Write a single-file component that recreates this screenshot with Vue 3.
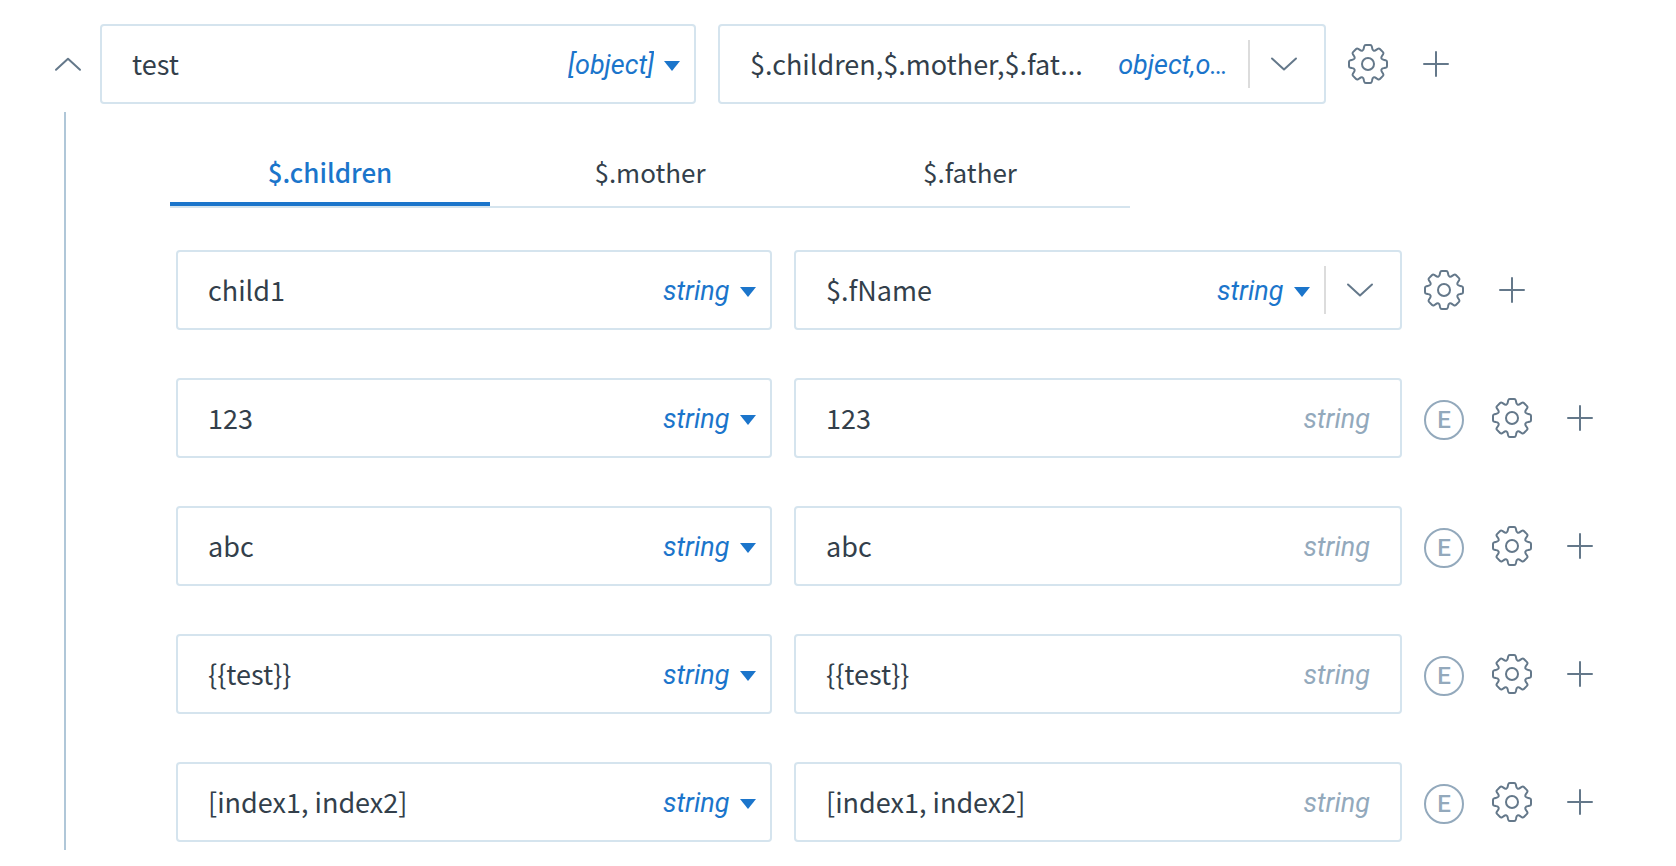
<script setup>
import { ref } from 'vue'

const root = ref({ name: 'test', type: '[object]', source: '$.children,$.mother,$.fat...', sourceType: 'object,o…' })
const tabs = ['$.children', '$.mother', '$.father']
const activeTab = ref(0)

const rows = ref([
  { name: 'child1', source: '$.fName', picker: true },
  { name: '123', source: '123', picker: false },
  { name: 'abc', source: 'abc', picker: false },
  { name: '{{test}}', source: '{{test}}', picker: false },
  { name: '[index1, index2]', source: '[index1, index2]', picker: false },
])

// Outline of an eight-toothed gear centred in a 40 x 40 box.
function gearOutline() {
  const place = (angle, u, v) => {
    const x = 20 + u * Math.cos(angle) + v * Math.sin(angle)
    const y = 20 + u * Math.sin(angle) - v * Math.cos(angle)
    return `${x.toFixed(2)} ${y.toFixed(2)}`
  }
  let d = ''
  for (let i = 0; i < 8; i++) {
    const p = (u, v) => place((i * Math.PI) / 4, u, v)
    d += i === 0 ? `M${p(-5.55, 13.4)}` : ''
    d += `Q${p(-4.4, 13.9)} ${p(-4.1, 16.2)}L${p(-3.8, 17.6)}Q${p(-3.5, 19)} ${p(-2.2, 19)}`
    d += `L${p(2.2, 19)}Q${p(3.5, 19)} ${p(3.8, 17.6)}L${p(4.1, 16.2)}Q${p(4.4, 13.9)} ${p(5.55, 13.4)}`
  }
  return d + 'Z'
}
const gear = gearOutline()
</script>

<template>
  <main class="mapper">
    <div class="row root-row">
      <button class="icon-btn collapse" type="button" aria-label="Collapse">
        <svg class="icon" viewBox="0 0 40 40"><path d="M8 25.7 20 14.7l12 11" /></svg>
      </button>
      <div class="fields">
        <div class="field">
          <input v-model="root.name" class="text" type="text" aria-label="Target name" />
          <span class="type">
            <select class="type-select" aria-label="Target type"><option>{{ root.type }}</option></select>
            <svg class="caret" viewBox="0 0 16 10"><path d="M0 0h16L8 10z" /></svg>
          </span>
        </div>
        <div class="field">
          <input v-model="root.source" class="text" type="text" aria-label="Source path" />
          <button class="type-summary" type="button">{{ root.sourceType }}</button>
          <button class="opener" type="button" aria-label="Choose source">
            <svg class="icon" viewBox="0 0 40 40"><path d="M8 14.5l12 11 12-11" /></svg>
          </button>
        </div>
      </div>
      <div class="actions">
        <button class="icon-btn" type="button" aria-label="Settings">
          <svg class="icon" viewBox="0 0 40 40"><path :d="gear" /><circle cx="20" cy="20" r="6" /></svg>
        </button>
        <button class="icon-btn" type="button" aria-label="Add">
          <svg class="icon" viewBox="0 0 40 40"><path d="M8 20h24M20 8v24" /></svg>
        </button>
      </div>
    </div>

    <section class="nested">
      <div class="tabs" role="tablist">
        <button
          v-for="(tab, i) in tabs"
          :key="tab"
          class="tab"
          :class="{ active: i === activeTab }"
          type="button"
          role="tab"
          :aria-selected="i === activeTab"
          @click="activeTab = i"
        >{{ tab }}</button>
      </div>

      <div class="rows">
        <div v-for="(row, i) in rows" :key="i" class="row">
          <div class="fields">
            <div class="field">
              <input v-model="row.name" class="text" type="text" aria-label="Target name" />
              <span class="type">
                <select class="type-select" aria-label="Target type"><option>string</option></select>
                <svg class="caret" viewBox="0 0 16 10"><path d="M0 0h16L8 10z" /></svg>
              </span>
            </div>
            <div class="field">
              <input v-model="row.source" class="text" type="text" aria-label="Source value" />
              <template v-if="row.picker">
                <span class="type">
                  <select class="type-select" aria-label="Source type"><option>string</option></select>
                  <svg class="caret" viewBox="0 0 16 10"><path d="M0 0h16L8 10z" /></svg>
                </span>
                <button class="opener" type="button" aria-label="Choose source">
                  <svg class="icon" viewBox="0 0 40 40"><path d="M8 14.5l12 11 12-11" /></svg>
                </button>
              </template>
              <span v-else class="type-fixed">string</span>
            </div>
          </div>
          <div class="actions">
            <span v-if="!row.picker" class="badge">E</span>
            <button class="icon-btn" type="button" aria-label="Settings">
              <svg class="icon" viewBox="0 0 40 40"><path :d="gear" /><circle cx="20" cy="20" r="6" /></svg>
            </button>
            <button class="icon-btn" type="button" aria-label="Add">
              <svg class="icon" viewBox="0 0 40 40"><path d="M8 20h24M20 8v24" /></svg>
            </button>
          </div>
        </div>
      </div>
    </section>
  </main>
</template>

<style>
body {
  background: #fff;
}
</style>

<style scoped>
.mapper {
  padding: 24px 0 16px;
  color: #333f4b;
  font-family: "Noto Sans CJK SC", "Noto Sans", sans-serif;
}
.mapper *,
.mapper {
  box-sizing: border-box;
}
button,
input,
select {
  margin: 0;
  padding: 0;
  border: 0;
  background: none;
  color: inherit;
  font: inherit;
  outline: none;
}
button,
select {
  cursor: pointer;
}
.row {
  display: flex;
  align-items: center;
}
.root-row {
  padding-left: 48px;
}
.collapse {
  margin-right: 12px;
}
.fields {
  display: grid;
  grid-template-columns: 149fr 152fr;
  gap: 22px;
  width: calc(100vw - 450px);
}
.field {
  display: flex;
  align-items: center;
  min-width: 0;
  height: 80px;
  border: 2px solid #d5e4ee;
  border-radius: 4px;
}
.text {
  flex: 1;
  min-width: 0;
  height: 100%;
  padding: 0 0 2px 30px;
  font-size: 27px;
  text-overflow: ellipsis;
}
.type {
  display: flex;
  align-items: center;
  gap: 10px;
  margin-right: 14px;
}
.type-select,
.type-summary,
.type-fixed {
  padding-top: 2px;
  color: #1b75cb;
  font: italic 27px/40px Roboto, sans-serif;
}
.type-select {
  appearance: none;
}
.caret {
  width: 16px;
  height: 10px;
  margin-top: 4px;
  fill: #1b75cb;
}
.type-summary {
  margin: 0 20px 0 12px;
}
.type-fixed {
  margin-right: 30px;
  color: #93a9bc;
}
.opener {
  display: flex;
  align-items: center;
  width: 76px;
  height: 48px;
  padding-left: 14px;
  border-left: 2px solid #dcdcdc;
}
.actions {
  display: flex;
  align-items: center;
  gap: 28px;
  margin-left: 22px;
}
.icon-btn {
  display: flex;
  width: 40px;
  height: 40px;
}
.icon {
  width: 40px;
  height: 40px;
  fill: none;
  stroke: #64788a;
  stroke-width: 2;
  stroke-linecap: round;
  stroke-linejoin: round;
}
.badge {
  width: 40px;
  height: 40px;
  margin-top: 4px;
  border: 2px solid #93a9bc;
  border-radius: 50%;
  color: #93a9bc;
  font: 500 24px/36px Roboto, sans-serif;
  text-align: center;
}
.nested {
  margin: 8px 0 0 64px;
  padding: 28px 0 8px 104px;
  border-left: 2px solid #b0c7d8;
}
.tabs {
  display: flex;
  max-width: 960px;
  border-bottom: 2px solid #d5e4ee;
}
.tab {
  flex: 1;
  height: 66px;
  border-bottom: 4px solid transparent;
  font-size: 26px;
}
.tab.active {
  border-bottom-color: #1b75cb;
  color: #1b75cb;
  font-weight: 500;
}
.rows {
  display: flex;
  flex-direction: column;
  gap: 48px;
  padding: 42px 0 0 6px;
}
</style>
